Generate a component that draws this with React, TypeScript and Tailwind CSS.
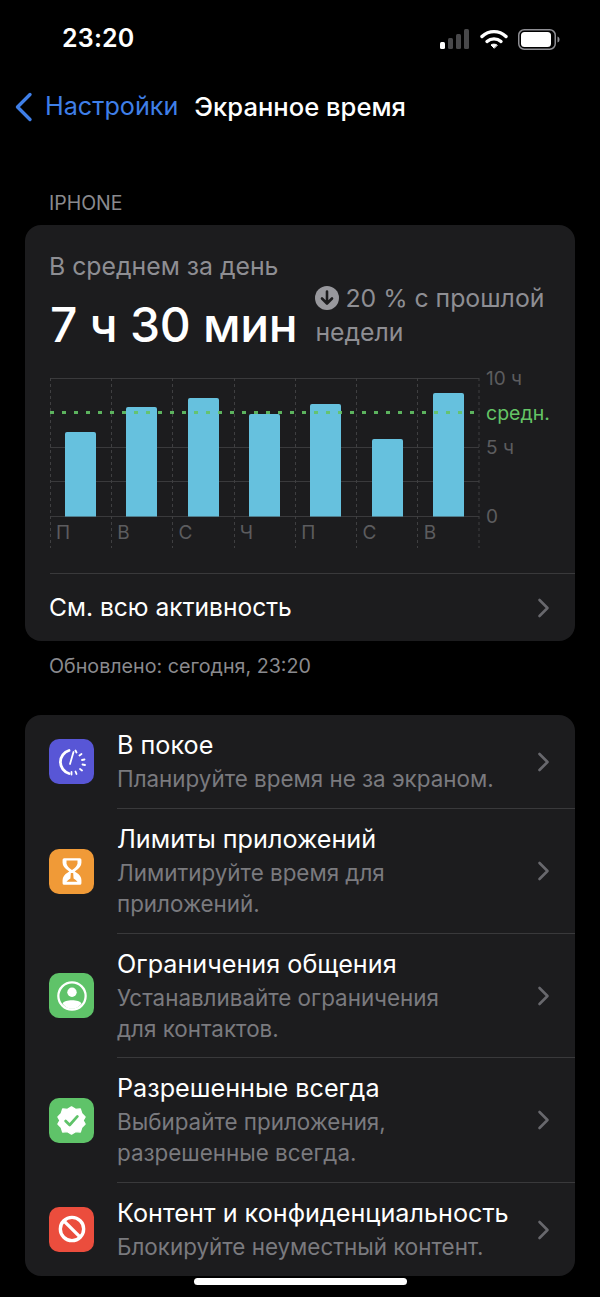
import type { ReactNode } from 'react';

const BARS = [
  { day: 'П', x: 15, top: 54 },
  { day: 'В', x: 76, top: 29 },
  { day: 'С', x: 138, top: 20 },
  { day: 'Ч', x: 199, top: 36 },
  { day: 'П', x: 260, top: 26 },
  { day: 'С', x: 322, top: 61 },
  { day: 'В', x: 383, top: 15 },
];

const GRID_X = [0.5, 61.5, 122.5, 184.5, 245.5, 306.5, 367.5, 429];

function Chevron() {
  return (
    <svg width="14" height="20" viewBox="0 0 14 20" fill="none" className="shrink-0">
      <path d="M2.5 2 L10.5 10 L2.5 18" stroke="#68686d" strokeWidth="2.6" strokeLinecap="round" strokeLinejoin="round" />
    </svg>
  );
}

function StatusBar() {
  return (
    <div className="h-[81px] flex items-center justify-between pl-[62px] pr-[40px] pb-[3px]">
      <span className="text-[25px] font-semibold text-white tracking-[0.2px]">23:20</span>
      <div className="flex items-center gap-[10px]">
        <svg width="30" height="20" viewBox="0 0 30 20">
          <rect x="0" y="13" width="5" height="7" rx="1.5" fill="#fff" />
          <rect x="8" y="9" width="5" height="11" rx="1.5" fill="#48484a" />
          <rect x="16" y="5" width="5" height="15" rx="1.5" fill="#48484a" />
          <rect x="24" y="0" width="5" height="20" rx="1.5" fill="#48484a" />
        </svg>
        <svg width="28" height="21" viewBox="0 0 28 21" fill="none" stroke="#fff" strokeLinecap="round">
          <path d="M2 7.5 C9 1 19 1 26 7.5" strokeWidth="3.4" />
          <path d="M7 12.5 C11 9 17 9 21 12.5" strokeWidth="3.4" />
          <path d="M14 19 L11 16 C12.5 14.8 15.5 14.8 17 16 Z" fill="#fff" strokeWidth="1" strokeLinejoin="round" />
        </svg>
        <svg width="42" height="21" viewBox="0 0 42 21" fill="none">
          <rect x="0.75" y="0.75" width="36.5" height="19.5" rx="5.5" stroke="#8e8e93" strokeWidth="1.5" />
          <rect x="3" y="3" width="30" height="15" rx="3.5" fill="#fff" />
          <path d="M39.5 7.5 C41 8 41.5 9 41.5 10.5 C41.5 12 41 13 39.5 13.5 Z" fill="#8e8e93" />
        </svg>
      </div>
    </div>
  );
}

function Chart() {
  return (
    <div className="relative mt-[22px] ml-[25px] h-[170px]">
      <svg width="430" height="170" viewBox="0 0 430 170" className="block">
        {[0.5, 69.5, 103.5, 138.5].map(y => (
          <line key={y} x1="0" x2="429" y1={y} y2={y} stroke="#3a3a3c" strokeWidth="1" />
        ))}
        {GRID_X.map(x => (
          <line key={x} x1={x} x2={x} y1="0" y2="170" stroke="#3f3f41" strokeWidth="1" strokeDasharray="3 3" />
        ))}
        {BARS.map(bar => (
          <path
            key={bar.x}
            d={`M${bar.x} 138.5 V${bar.top + 2} a2 2 0 0 1 2 -2 H${bar.x + 29} a2 2 0 0 1 2 2 V138.5 Z`}
            fill="#66c1de"
          />
        ))}
        <line x1="0" x2="429" y1="34.5" y2="34.5" stroke="#64c466" strokeWidth="3" strokeDasharray="4 8" opacity="0.9" />
      </svg>
      <div className="absolute left-0 top-[143px] w-[429px] grid grid-cols-7 text-[19px] leading-[24px] text-[#5c5c5f]">
        {BARS.map(bar => (
          <span key={bar.x} className="pl-[6px]">{bar.day}</span>
        ))}
      </div>
      <span className="absolute left-[436px] top-[-11px] text-[19px] leading-[24px] text-[#5c5c5f]">10 ч</span>
      <span className="absolute left-[436px] top-[23px] text-[19.5px] leading-[24px] text-[#64c466]">средн.</span>
      <span className="absolute left-[436px] top-[58px] text-[19px] leading-[24px] text-[#5c5c5f]">5 ч</span>
      <span className="absolute left-[436px] top-[127px] text-[19px] leading-[24px] text-[#5c5c5f]">0</span>
    </div>
  );
}

function IconBox({ color, children }: { color: string; children: ReactNode }) {
  return (
    <div className={`w-[45px] h-[45px] rounded-[10px] flex items-center justify-center shrink-0 ${color}`}>
      {children}
    </div>
  );
}

function Row({
  icon,
  title,
  lines,
  last,
}: {
  icon: ReactNode;
  title: string;
  lines: string[];
  last?: boolean;
}) {
  return (
    <div className="flex items-center">
      <div className="w-[92px] flex justify-center pl-[1px]">{icon}</div>
      <div className={`flex-1 flex items-center pr-[24px] pt-[14px] pb-[13.75px] ${last ? '' : 'border-b border-[#39393b]'}`}>
        <div className="flex-1 min-w-0">
          <div className="text-[25.2px] leading-[33px] mb-[1px] text-white">{title}</div>
          {lines.map(line => (
            <div key={line} className="text-[22.4px] leading-[31px] text-[#7a7a7e]">{line}</div>
          ))}
        </div>
        <Chevron />
      </div>
    </div>
  );
}

export default function App() {
  return (
    <div className="w-[600px] h-[1297px] bg-black relative overflow-hidden font-['Inter',sans-serif]">
      <StatusBar />

      <div className="h-[52px] flex items-center pl-[14px]">
        <svg width="20" height="30" viewBox="0 0 20 30" fill="none">
          <path d="M16 2.5 L3.5 15 L16 27.5" stroke="#3f7fe8" strokeWidth="3.4" strokeLinecap="round" strokeLinejoin="round" />
        </svg>
        <span className="ml-[11px] text-[25.2px] text-[#3f7fe8]">Настройки</span>
        <span className="ml-[16px] text-[25.6px] font-medium text-white">Экранное время</span>
      </div>

      <div className="mt-[58px] pl-[49px] text-[19.5px] leading-[24px] text-[#8a8a8e]">IPHONE</div>

      <div className="mx-[25px] mt-[10px] rounded-[16px] bg-[#1c1c1e] pt-[26px] h-[416px]">
        <div className="pl-[24px] text-[24.8px] leading-[31px] text-[#8e8e93]">В среднем за день</div>
        <div className="flex pl-[25px] mt-[1px]">
          <span className="text-[48px] leading-[62px] mt-[11px] font-medium tracking-[-0.3px] text-white whitespace-nowrap">7 ч 30 мин</span>
          <div className="ml-[18px] mt-[-2px] text-[24.8px] leading-[34px] text-[#8e8e93]">
            <div className="flex items-center gap-[6px]">
              <svg width="24" height="24" viewBox="0 0 24 24" fill="none">
                <circle cx="12" cy="12" r="12" fill="#98989d" />
                <path d="M12 5.5 V17 M7 12.5 L12 17.5 L17 12.5" stroke="#1c1c1e" strokeWidth="2.6" strokeLinecap="round" strokeLinejoin="round" />
              </svg>
              <span>20 % с прошлой</span>
            </div>
            <div>недели</div>
          </div>
        </div>

        <Chart />

        <div className="ml-[25px] mt-[25px] border-t border-[#39393b] h-[68px] flex items-center justify-between pr-[24px]">
          <span className="-ml-[1px] text-[24.6px] text-white">См. всю активность</span>
          <Chevron />
        </div>
      </div>

      <div className="mt-[13px] pl-[49px] text-[19.7px] leading-[24px] text-[#8a8a8e]">Обновлено: сегодня, 23:20</div>

      <div className="mx-[25px] mt-[37px] rounded-[16px] bg-[#1c1c1e] overflow-hidden">
        <Row
          title="В покое"
          lines={['Планируйте время не за экраном.']}
          icon={
            <IconBox color="bg-[#5856d6]">
              <svg width="32" height="32" viewBox="0 0 32 32" fill="none" stroke="#fff" strokeLinecap="round">
                <path d="M13 4.5 A12 12 0 0 0 13 27.5" strokeWidth="2.8" />
                <path d="M17.5 6 L14 18" strokeWidth="1.8" />
                <path d="M19.5 4.5 L20.5 6.5 M25.5 8 L23.5 9.5 M28.5 13.5 L26 14 M29 19 L26.5 18.5 M26 24.5 L24 23 M20.5 28 L19.5 25.5 M15.5 28.5 L15.5 26" strokeWidth="1.8" />
              </svg>
            </IconBox>
          }
        />
        <Row
          title="Лимиты приложений"
          lines={['Лимитируйте время для', 'приложений.']}
          icon={
            <IconBox color="bg-[#f09a37]">
              <svg width="22" height="31" viewBox="0 0 28 36">
                <path
                  fill="#fff"
                  fillRule="evenodd"
                  d="M4 1 H24 Q26 1 26 3 V7 Q26 13 17.5 18 Q26 23 26 29 V33 Q26 35 24 35 H4 Q2 35 2 33 V29 Q2 23 10.5 18 Q2 13 2 7 V3 Q2 1 4 1 Z M7 4 V8 Q8 12 14 16 Q20 12 21 8 V4 Z"
                />
                <path d="M12.5 20 H15.5 L16 27 Q19 29 21 31 H7 Q9 29 12 27 Z" fill="#f09a37" />
              </svg>
            </IconBox>
          }
        />
        <Row
          title="Ограничения общения"
          lines={['Устанавливайте ограничения', 'для контактов.']}
          icon={
            <IconBox color="bg-[#5fc369]">
              <svg width="32" height="32" viewBox="0 0 34 34" fill="none">
                <circle cx="17" cy="17" r="14.5" stroke="#fff" strokeWidth="2.4" />
                <circle cx="17" cy="13" r="5" fill="#fff" />
                <path d="M7 25 C9 20.5 25 20.5 27 25 C24 29.5 20 30.5 17 30.5 C14 30.5 10 29.5 7 25 Z" fill="#fff" />
              </svg>
            </IconBox>
          }
        />
        <Row
          title="Разрешенные всегда"
          lines={['Выбирайте приложения,', 'разрешенные всегда.']}
          icon={
            <IconBox color="bg-[#5fc369]">
              <svg width="29" height="29" viewBox="0 0 32 32" fill="none">
                <path
                  d="M16 1 L20.5 3.8 L25.7 3.2 L27.3 8.2 L31 12 L28.8 16 L31 20 L27.3 23.8 L25.7 28.8 L20.5 28.2 L16 31 L11.5 28.2 L6.3 28.8 L4.7 23.8 L1 20 L3.2 16 L1 12 L4.7 8.2 L6.3 3.2 L11.5 3.8 Z"
                  fill="#fff"
                  stroke="#fff"
                  strokeWidth="1.5"
                  strokeLinejoin="round"
                />
                <path d="M9.5 16.5 L14 21 L22.5 11.5" stroke="#5fc369" strokeWidth="3" strokeLinecap="round" strokeLinejoin="round" />
              </svg>
            </IconBox>
          }
        />
        <Row
          last
          title="Контент и конфиденциальность"
          lines={['Блокируйте неуместный контент.']}
          icon={
            <IconBox color="bg-[#eb4d3d]">
              <svg width="28" height="28" viewBox="0 0 30 30" fill="none" stroke="#fff" strokeWidth="3.6">
                <circle cx="15" cy="15" r="12.5" />
                <path d="M6.5 6.5 L23.5 23.5" />
              </svg>
            </IconBox>
          }
        />
      </div>

      <div className="absolute left-[194px] top-[1278px] w-[213px] h-[7px] rounded-full bg-white" />
    </div>
  );
}
